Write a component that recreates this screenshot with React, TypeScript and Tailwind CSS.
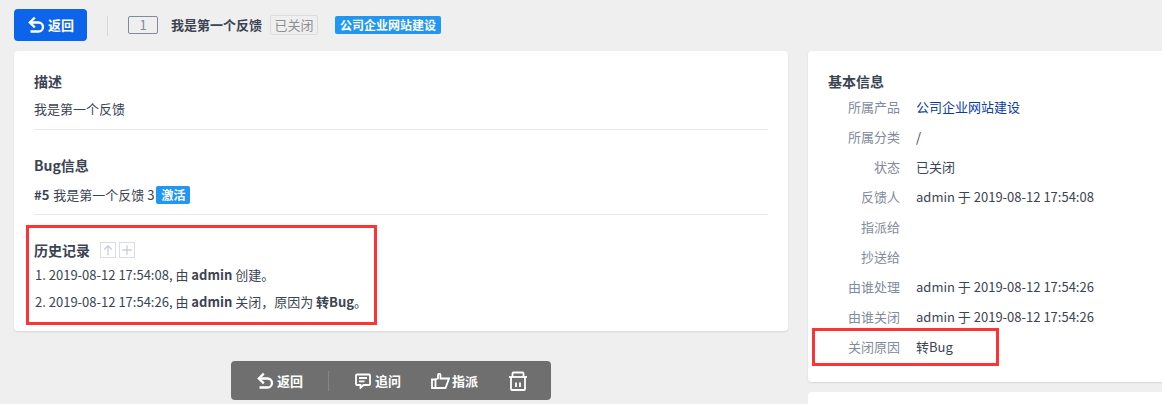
import React from "react";

function BackIcon({ className }: { className?: string }) {
  return (
    <svg viewBox="0 0 18 18" className={className} fill="none" stroke="currentColor" strokeWidth="2.3">
      <path d="M3 6.500h8.500a4.500 4.500 0 0 1 0 9H3.500" />
      <path d="M7.800 1.600 2.800 6.500l5 4.900" />
    </svg>
  );
}

function ChatIcon() {
  return (
    <svg viewBox="0 0 16 16" className="h-[16px] w-[16px]" fill="none" stroke="currentColor" strokeWidth="1.800">
      <path d="M2 1.500h12a1 1 0 0 1 1 1v8.500a1 1 0 0 1-1 1H8.500L5.500 14.800V12H2a1 1 0 0 1-1-1V2.500a1 1 0 0 1 1-1z" />
      <path d="M4 5h8M4 8.300h5.500" />
    </svg>
  );
}

function HandIcon() {
  return (
    <svg viewBox="0 0 19 16" className="h-[16px] w-[19px]" fill="none" stroke="currentColor" strokeWidth="1.800">
      <path d="M1 6.500h3.500v8.500H1z" />
      <path d="M4.500 6.500 7 5.500V2a1.200 1.200 0 0 1 2.500 0v3.500h8.500l-3.500 9.500H4.500" />
    </svg>
  );
}

function TrashIcon() {
  return (
    <svg viewBox="0 0 20 20" className="h-[20px] w-[20px]" fill="none" stroke="currentColor" strokeWidth="1.800">
      <path d="M1 6h18" />
      <path d="M4.500 6V2.500a1 1 0 0 1 1-1h9a1 1 0 0 1 1 1V6" />
      <path d="M3 6v12a1 1 0 0 0 1 1h12a1 1 0 0 0 1-1V6" />
      <path d="M8 11.500v4.500M12 11.500v4.500" />
    </svg>
  );
}

function Info({ label, children, link }: { label: string; children?: React.ReactNode; link?: boolean }) {
  return (
    <div className="flex h-[30px] items-center">
      <div className="w-[72px] text-right text-[#838a9d]">{label}</div>
      <div className={"ml-[16px] " + (link ? "text-[#0c3c9c]" : "text-[#3c4353]")}>{children}</div>
    </div>
  );
}

export default function App() {
  return (
    <div
      className="relative h-[404px] w-[1162px] overflow-hidden bg-[#efefef] text-[13px] text-[#3c4353]"
      style={{ fontFamily: '"Noto Sans CJK SC", "Noto Sans", sans-serif' }}
    >
      <div className="flex h-[51px] items-start pl-[14px] pt-[9px]">
        <button className="flex h-[32px] w-[73px] items-center justify-center gap-[3px] rounded-[4px] bg-[#0c64eb] font-bold text-white">
          <BackIcon className="h-[18px] w-[18px]" />
          <span>返回</span>
        </button>
        <div className="ml-[20px] mt-[7px] h-[20px] w-px bg-[#d5d8de]" />
        <div className="ml-[20px] mt-[7px] flex h-[18px] w-[30px] items-center justify-center rounded-[2px] border border-[#838a9d] text-[13px] text-[#838a9d]">
          1
        </div>
        <div className="ml-[13px] mt-[6px] font-bold leading-[20px]">我是第一个反馈</div>
        <div className="ml-[8px] mt-[6px] flex h-[20px] w-[48px] items-center justify-center rounded-[2px] border border-[#dcdcdc] text-[#8e8e93]">
          已关闭
        </div>
        <div className="ml-[17px] mt-[7px] flex h-[18px] w-[106px] items-center justify-center rounded-[2px] bg-[#2196f3] text-[12px] font-bold text-white">
          公司企业网站建设
        </div>
      </div>

      <div className="flex gap-[20px] pl-[14px]">
        <div className="w-[774px] shrink-0">
          <div className="h-[280px] rounded-[4px] bg-white px-[20px] shadow-[0_1px_2px_rgba(0,0,0,0.1)]">
            <div className="border-b border-[#e8e8e8] pb-[10px] pt-[19px]">
              <div className="text-[14px] font-bold leading-[22px]">描述</div>
              <div className="mt-[7px] leading-[20px]">我是第一个反馈</div>
            </div>
            <div className="border-b border-[#e8e8e8] pb-[9px] pt-[24px]">
              <div className="text-[14px] font-bold leading-[22px]">Bug信息</div>
              <div className="mt-[9px] flex h-[20px] items-center">
                <b>#5</b>
                <span className="ml-[4px]">我是第一个反馈 3</span>
                <span className="ml-[2px] flex h-[18px] w-[34px] items-center justify-center rounded-[2px] bg-[#2196f3] text-[12px] font-bold text-white">
                  激活
                </span>
              </div>
            </div>
            <div className="pt-[24px]">
              <div className="flex h-[22px] items-center">
                <span className="text-[14px] font-bold">历史记录</span>
                <span className="ml-[10px] flex h-[16px] w-[16px] items-center justify-center border border-[#d8dde6] text-[#c8d0dc]">
                  <svg viewBox="0 0 14 14" className="h-[12px] w-[12px]" fill="none" stroke="currentColor" strokeWidth="1.500">
                    <path d="M7 13V2M2.500 6.500 7 2l4.500 4.500" />
                  </svg>
                </span>
                <span className="ml-[3px] flex h-[16px] w-[16px] items-center justify-center border border-[#d8dde6] text-[#c8d0dc]">
                  <svg viewBox="0 0 14 14" className="h-[12px] w-[12px]" fill="none" stroke="currentColor" strokeWidth="1.500">
                    <path d="M7 1.500v11M1.500 7h11" />
                  </svg>
                </span>
              </div>
              <div className="pl-[1px] leading-[27px]">
                <div>
                  1. 2019-08-12 17:54:08, 由 <b>admin</b> 创建。
                </div>
                <div>
                  2. 2019-08-12 17:54:26, 由 <b>admin</b> 关闭，原因为 <b>转Bug</b>。
                </div>
              </div>
            </div>
          </div>
          <div className="mt-[30px] pl-[217px]">
            <div className="flex h-[39px] w-[320px] items-center rounded-[4px] bg-[#6f6f6f] pl-[25px] font-bold text-white">
              <BackIcon className="h-[18px] w-[18px]" />
              <span className="ml-[3px]">返回</span>
              <div className="ml-[25px] h-[20px] w-px bg-[#858585]" />
              <div className="ml-[26px]"><ChatIcon /></div>
              <span className="ml-[4px]">追问</span>
              <div className="ml-[30px]"><HandIcon /></div>
              <span className="ml-[2px]">指派</span>
              <div className="ml-[30px]"><TrashIcon /></div>
            </div>
          </div>
        </div>

        <div className="w-[400px] shrink-0">
          <div className="h-[331px] rounded-[4px] bg-white pl-[20px] pt-[19px] shadow-[0_1px_2px_rgba(0,0,0,0.1)]">
            <div className="text-[14px] font-bold leading-[22px]">基本信息</div>
            <div>
              <Info label="所属产品" link>公司企业网站建设</Info>
              <Info label="所属分类">/</Info>
              <Info label="状态">已关闭</Info>
              <Info label="反馈人">admin 于 2019-08-12 17:54:08</Info>
              <Info label="指派给" />
              <Info label="抄送给" />
              <Info label="由谁处理">admin 于 2019-08-12 17:54:26</Info>
              <Info label="由谁关闭">admin 于 2019-08-12 17:54:26</Info>
              <Info label="关闭原因">转Bug</Info>
            </div>
          </div>
          <div className="mt-[10px] h-[100px] rounded-[4px] bg-white" />
        </div>
      </div>

      <div className="absolute left-[26px] top-[225px] h-[100px] w-[351px] border-[3px] border-[#ff3333]" />
      <div className="absolute left-[812px] top-[328px] h-[38px] w-[187px] border-[3px] border-[#ff3333]" />
    </div>
  );
}
